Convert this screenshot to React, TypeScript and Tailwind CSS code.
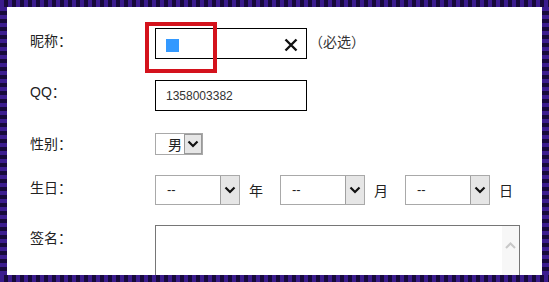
import React from "react";

const Chevron = () => (
  <svg width="12" height="8" viewBox="0 0 12 8">
    <path d="M1.5 1.5 L6 6 L10.5 1.5" fill="none" stroke="#111" strokeWidth="2.2" />
  </svg>
);

function Select({ w, text, h = 30 }: { w: number; text: string; h?: number }) {
  return (
    <div
      className="flex border border-[#a9a9a9] bg-white"
      style={{ width: w, height: h }}
    >
      <div className="flex-1 flex items-center pl-[11px] text-[13px] text-[#222] font-['Liberation_Sans',sans-serif]">
        {text}
      </div>
      <div className="w-[19px] bg-[#e6e6e6] border-l border-[#a0a0a0] flex items-center justify-center">
        <Chevron />
      </div>
    </div>
  );
}

export default function App() {
  return (
    <div className="w-[549px] h-[282px] overflow-hidden py-[7px] bg-[repeating-linear-gradient(90deg,#3b1c8e_0px,#3b1c8e_4px,#170a3a_4px,#170a3a_8px)]">
      <div className="h-full px-[7px] bg-[repeating-linear-gradient(180deg,#3b1c8e_0px,#3b1c8e_4px,#170a3a_4px,#170a3a_8px)]">
        <div className="relative h-full bg-white overflow-hidden pl-[23px] text-[14px] text-[#222] font-['Noto_Sans_CJK_SC',sans-serif]">
          {/* Row 1 */}
          <div className="flex items-start mt-[21px] h-[31px]">
            <div className="w-[125px] pt-[2px] leading-[20px]">昵称：</div>
            <div className="relative w-[152px] h-[31px] border border-black">
              <div className="absolute left-[10px] top-[10px] w-[13px] h-[13px] bg-[#3399ff]" />
              <svg className="absolute left-[128px] top-[9px]" width="14" height="14" viewBox="0 0 14 14">
                <path d="M1.5 1.5 L12.5 12.5 M12.5 1.5 L1.5 12.5" stroke="#111" strokeWidth="2.4" />
              </svg>
            </div>
            <div className="ml-[2px] pt-[3px] leading-[20px] text-[#333]">（必选）</div>
          </div>
          {/* Row 2 */}
          <div className="flex items-start mt-[21px] h-[31px]">
            <div className="w-[125px] pt-[2px] leading-[20px] font-['Liberation_Sans','Noto_Sans_CJK_SC',sans-serif]">QQ：</div>
            <div className="w-[152px] h-[31px] border border-black flex items-center pl-[10px] text-[12px] text-[#333] font-['Liberation_Sans',sans-serif]">
              1358003382
            </div>
          </div>
          {/* Row 3 */}
          <div className="flex items-start mt-[22px] h-[22px]">
            <div className="w-[125px] leading-[20px]">性别：</div>
            <div className="flex w-[48px] h-[22px] border border-[#a9a9a9]">
              <div className="flex-1 flex items-center justify-end pr-[2px] text-[14px]">男</div>
              <div className="w-[18px] bg-[#e6e6e6] border border-[#999] flex items-center justify-center">
                <Chevron />
              </div>
            </div>
          </div>
          {/* Row 4 */}
          <div className="flex items-start mt-[20px] h-[30px]">
            <div className="w-[125px] pt-[2px] leading-[20px]">生日：</div>
            <Select w={85} text="--" />
            <div className="ml-[9px] w-[31px] leading-[30px]">年</div>
            <Select w={85} text="--" />
            <div className="ml-[9px] w-[31px] leading-[30px]">月</div>
            <Select w={85} text="--" />
            <div className="ml-[9px] leading-[30px]">日</div>
          </div>
          {/* Row 5 */}
          <div className="flex items-start mt-[20px]">
            <div className="w-[125px] pt-[2px] leading-[20px]">签名：</div>
            <div className="relative w-[365px] h-[80px] border border-[#767676]">
              <div className="absolute right-0 top-0 w-[17px] h-full bg-[#f7f7f7] flex justify-center pt-[16px]">
                <svg width="11" height="7" viewBox="0 0 11 7">
                  <path d="M1 6 L5.5 1.5 L10 6" fill="none" stroke="#c8c8c8" strokeWidth="2" />
                </svg>
              </div>
            </div>
          </div>
          {/* Red annotation box */}
          <div className="absolute left-[138px] top-[15px] w-[72px] h-[51px] border-[4px] border-[#d4121c]" />
        </div>
      </div>
    </div>
  );
}
